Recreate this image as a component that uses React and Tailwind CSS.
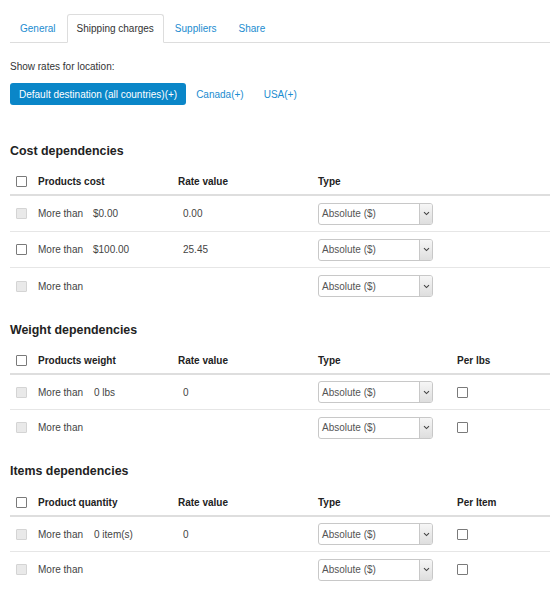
import React from 'react';

const sections = [
    {
        title: 'Cost dependencies',
        label: 'Products cost',
        extra: null,
        rowH: 'h-[36px]',
        headMt: 'mt-[7px]',
        gap: 'mb-[16px]',
        rows: [
            { enabled: false, value: '$0.00', rate: '0.00' },
            { enabled: true, value: '$100.00', rate: '25.45' },
            { enabled: false, value: '', rate: '' },
        ],
    },
    {
        title: 'Weight dependencies',
        label: 'Products weight',
        extra: 'Per lbs',
        rowH: 'h-[35px]',
        headMt: 'mt-[7px]',
        gap: 'mb-[16px]',
        rows: [
            { enabled: false, value: '0 lbs', rate: '0', pad: true },
            { enabled: false, value: '', rate: '' },
        ],
    },
    {
        title: 'Items dependencies',
        label: 'Product quantity',
        extra: 'Per Item',
        rowH: 'h-[35px]',
        headMt: 'mt-[8px]',
        gap: '',
        rows: [
            { enabled: false, value: '0 item(s)', rate: '0', pad: true },
            { enabled: false, value: '', rate: '' },
        ],
    },
];

function Check({ disabled }) {
    return (
        <span
            className={
                'inline-block w-[11px] h-[11px] rounded-[1px] border ' +
                (disabled ? 'bg-[#e9e9e9] border-[#d4d4d4]' : 'bg-white border-[#7a7a7a]')
            }
        />
    );
}

function TypeSelect() {
    return (
        <div className="flex w-[115px] h-[22px] rounded-[3px] border border-[#c8c8c8] bg-white overflow-hidden">
            <span className="flex-1 flex items-center pl-[3px] text-[10px] text-[#555]">Absolute ($)</span>
            <span className="w-[13px] flex items-center justify-center border-l border-[#c8c8c8] bg-gradient-to-b from-[#f6f6f6] to-[#dedede]">
                <svg width="7" height="5" viewBox="0 0 7 5">
                    <path d="M1 1.2 L3.5 3.6 L6 1.2" fill="none" stroke="#444" strokeWidth="1.1" />
                </svg>
            </span>
        </div>
    );
}

function Section({ section }) {
    return (
        <div className={section.gap}>
            <h2 className="h-[20px] flex items-center text-[12.4px] font-bold text-[#222]">{section.title}</h2>
            <div className={section.headMt + ' flex items-center h-[28px] border-b-2 border-[#dedede] text-[10px] font-bold text-[#222]'}>
                <span className="w-[28px] pl-[6px] flex items-center"><Check /></span>
                <span className="w-[140px]">{section.label}</span>
                <span className="w-[140px]">Rate value</span>
                <span className="w-[139px]">Type</span>
                {section.extra && <span>{section.extra}</span>}
            </div>
            {section.rows.map((row, i) => (
                <div
                    key={i}
                    className={
                        'flex items-center text-[10px] text-[#444] ' +
                        section.rowH +
                        (i < section.rows.length - 1 ? ' border-b border-[#e6e6e6]' : '')
                    }
                >
                    <span className="w-[28px] pl-[6px] flex items-center"><Check disabled={!row.enabled} /></span>
                    <span className="w-[140px] flex">
                        <span className={row.pad ? 'w-[56px]' : 'w-[55px]'}>More than</span>
                        <span>{row.value}</span>
                    </span>
                    <span className="w-[140px] pl-[5px]">{row.rate}</span>
                    <span className="w-[139px]"><TypeSelect /></span>
                    {section.extra && <span className="flex items-center"><Check /></span>}
                </div>
            ))}
        </div>
    );
}

export default function App() {
    return (
        <div className="w-[560px] h-[599px] bg-white px-[10px] pt-[14px] font-['Liberation_Sans',Arial,sans-serif] overflow-hidden">
            {/* tabs */}
            <div className="flex border-b border-[#dddddd] h-[29px] w-[540px]">
                <span className="px-[10px] flex items-center text-[10px] text-[#1b8cd0] mr-[1px]">General</span>
                <span className="px-[9px] flex items-center text-[10px] text-[#333] bg-white border border-[#dddddd] border-b-white rounded-t-[3px] -mb-[1px] mr-[1px]">
                    Shipping charges
                </span>
                <span className="px-[10px] flex items-center text-[10px] text-[#1b8cd0] mr-[2px]">Suppliers</span>
                <span className="px-[10px] flex items-center text-[10px] text-[#1b8cd0]">Share</span>
            </div>

            <p className="mt-[17px] text-[10px] text-[#333] leading-[14px]">Show rates for location:</p>

            <div className="mt-[9px] flex items-center">
                <span className="h-[22px] px-[9px] flex items-center rounded-[3px] bg-[#0a86c8] text-white text-[10px]">
                    Default destination (all countries)(+)
                </span>
                <span className="px-[10px] text-[10px] text-[#1b8cd0]">Canada(+)</span>
                <span className="px-[10px] text-[10px] text-[#1b8cd0]">USA(+)</span>
            </div>

            <div className="w-[540px] mt-[36px] flex flex-col">
                {sections.map((s) => (
                    <Section key={s.title} section={s} />
                ))}
            </div>
        </div>
    );
}
